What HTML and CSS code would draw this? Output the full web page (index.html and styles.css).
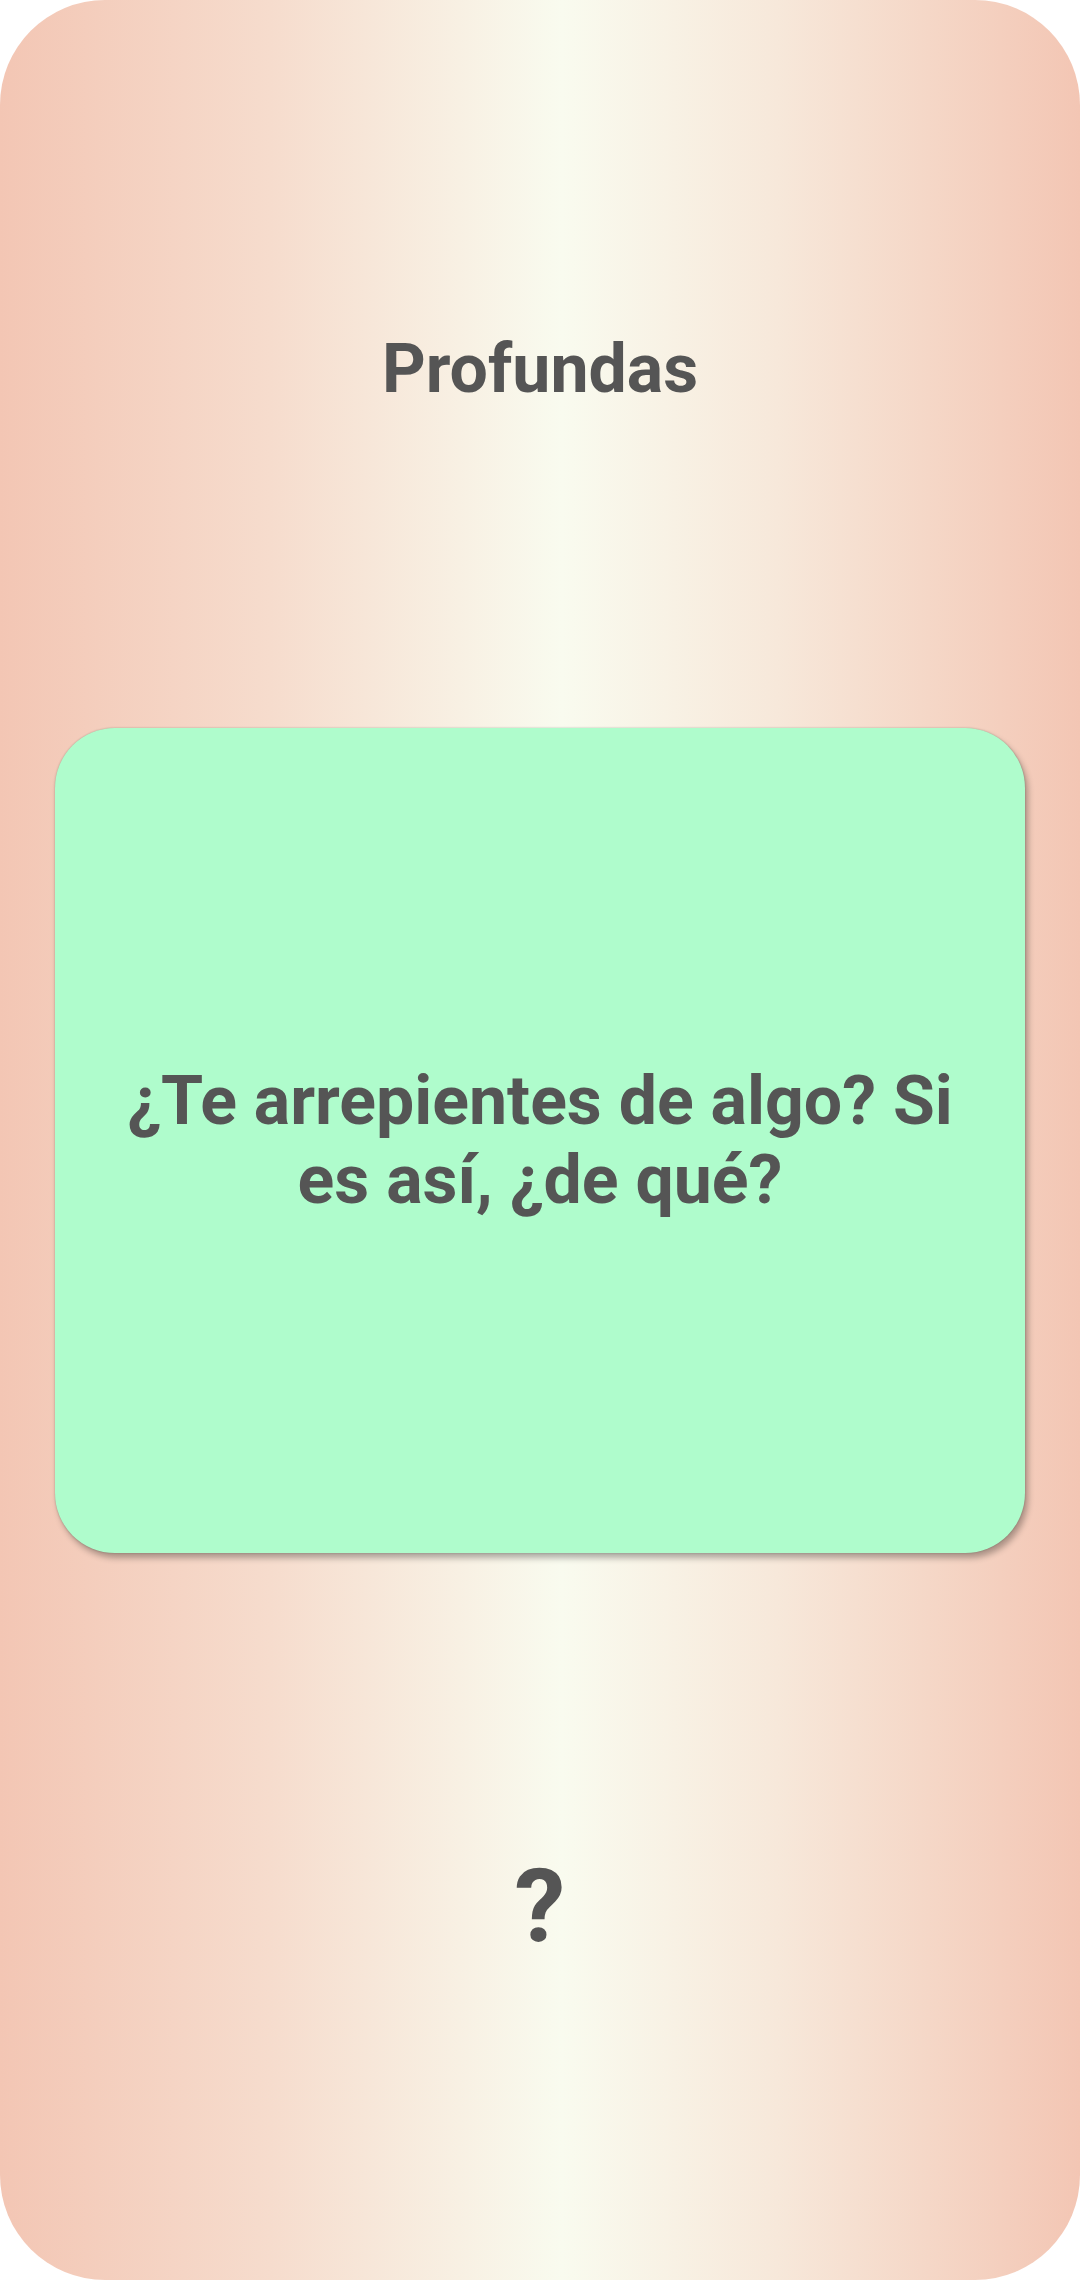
FILE: index.html
```html
<!DOCTYPE html>
<html lang="es">
<head>
<meta charset="utf-8">
<title>Profundas</title>
<link rel="stylesheet" href="styles.css">
</head>
<body>
<main class="screen">
  <h1 class="title">Profundas</h1>
  <section class="card">
    <p class="question">¿Te arrepientes de algo? Si es así, ¿de qué?</p>
  </section>
  <div class="mark">?</div>
</main>
</body>
</html>
```
FILE: styles.css
```css
html, body {
  margin: 0;
  padding: 0;
  background: #ffffff;
}

.screen {
  box-sizing: border-box;
  width: 1080px;
  height: 2280px;
  border-radius: 105px;
  background: linear-gradient(to right, #f3c6b4 0%, #f6dccd 25%, #f9fbef 52%, #f7e8da 72%, #f3c6b4 100%);
  display: flex;
  flex-direction: column;
  align-items: center;
  padding-top: 326px;
  font-family: Roboto, "Noto Sans", sans-serif;
  color: #555555;
}

.title {
  margin: 0;
  font-size: 68px;
  line-height: 86px;
  font-weight: 700;
  text-align: center;
}

.card {
  box-sizing: border-box;
  margin-top: 316px;
  width: 970px;
  height: 825px;
  background: #affccc;
  border-radius: 60px;
  box-shadow: 0 0 2px rgba(0, 0, 0, 0.25), 3px 5px 6px rgba(0, 0, 0, 0.3);
  display: flex;
  align-items: center;
  justify-content: center;
  padding: 0 40px;
}

.question {
  margin: 0;
  font-size: 68px;
  line-height: 79px;
  font-weight: 700;
  text-align: center;
}

.mark {
  margin-top: 301px;
  font-size: 102px;
  line-height: 104px;
  font-weight: 700;
}
```
